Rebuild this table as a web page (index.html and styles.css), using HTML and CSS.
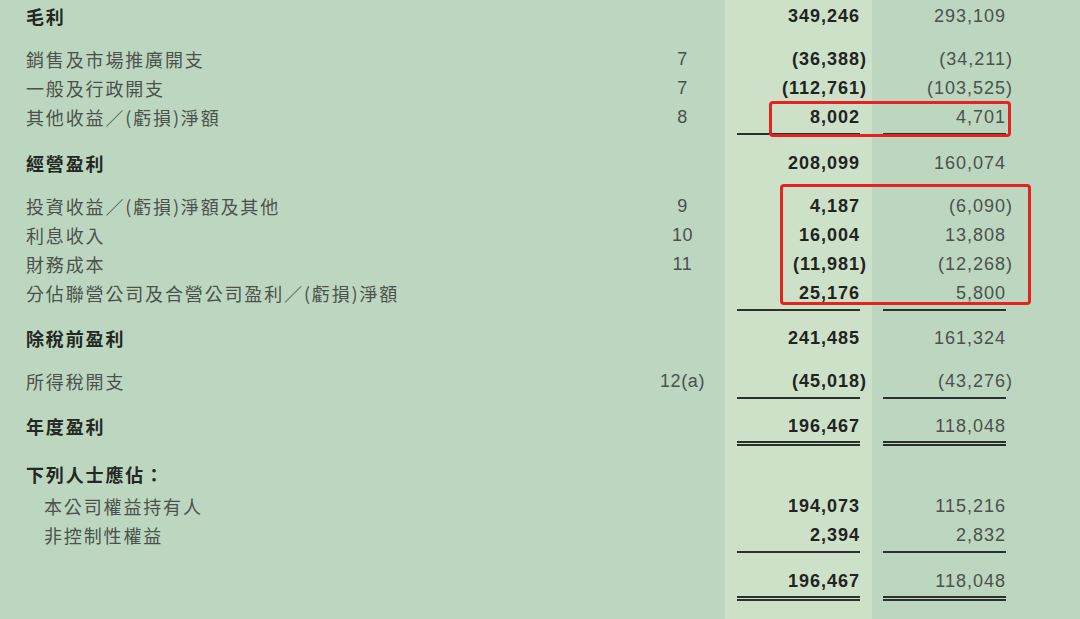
FILE: index.html
```html
<!DOCTYPE html>
<html lang="zh-Hant">
<head>
<meta charset="utf-8">
<title>綜合收益表</title>
<link rel="stylesheet" href="styles.css">
</head>
<body>
<div class="sheet">
  <div class="row">
    <div class="lbl b">毛利</div><div class="note"></div>
    <div class="num cur">349,246</div><div class="num prv">293,109</div>
  </div>

  <div class="row sp">
    <div class="lbl">銷售及市場推廣開支</div><div class="note">7</div>
    <div class="num cur">(36,388<span class="rp">)</span></div><div class="num prv">(34,211<span class="rp">)</span></div>
  </div>
  <div class="row">
    <div class="lbl">一般及行政開支</div><div class="note">7</div>
    <div class="num cur">(112,761<span class="rp">)</span></div><div class="num prv">(103,525<span class="rp">)</span></div>
  </div>
  <div class="row">
    <div class="lbl">其他收益／(虧損)淨額</div><div class="note">8</div>
    <div class="num cur u">8,002</div><div class="num prv u">4,701</div>
  </div>

  <div class="row sp">
    <div class="lbl b">經營盈利</div><div class="note"></div>
    <div class="num cur">208,099</div><div class="num prv">160,074</div>
  </div>

  <div class="row sp">
    <div class="lbl">投資收益／(虧損)淨額及其他</div><div class="note">9</div>
    <div class="num cur">4,187</div><div class="num prv">(6,090<span class="rp">)</span></div>
  </div>
  <div class="row">
    <div class="lbl">利息收入</div><div class="note">10</div>
    <div class="num cur">16,004</div><div class="num prv">13,808</div>
  </div>
  <div class="row">
    <div class="lbl">財務成本</div><div class="note">11</div>
    <div class="num cur">(11,981<span class="rp">)</span></div><div class="num prv">(12,268<span class="rp">)</span></div>
  </div>
  <div class="row">
    <div class="lbl">分佔聯營公司及合營公司盈利／(虧損)淨額</div><div class="note"></div>
    <div class="num cur u">25,176</div><div class="num prv u">5,800</div>
  </div>

  <div class="row sp-s">
    <div class="lbl b">除稅前盈利</div><div class="note"></div>
    <div class="num cur">241,485</div><div class="num prv">161,324</div>
  </div>

  <div class="row sp">
    <div class="lbl">所得稅開支</div><div class="note">12(a)</div>
    <div class="num cur u">(45,018<span class="rp">)</span></div><div class="num prv u">(43,276<span class="rp">)</span></div>
  </div>

  <div class="row sp-s">
    <div class="lbl b">年度盈利</div><div class="note"></div>
    <div class="num cur uu">196,467</div><div class="num prv uu">118,048</div>
  </div>

  <div class="row sp">
    <div class="lbl b">下列人士應佔：</div><div class="note"></div>
    <div class="num cur"></div><div class="num prv"></div>
  </div>
  <div class="row nudge">
    <div class="lbl ind">本公司權益持有人</div><div class="note"></div>
    <div class="num cur">194,073</div><div class="num prv">115,216</div>
  </div>
  <div class="row">
    <div class="lbl ind">非控制性權益</div><div class="note"></div>
    <div class="num cur u">2,394</div><div class="num prv u">2,832</div>
  </div>

  <div class="row sp">
    <div class="lbl"></div><div class="note"></div>
    <div class="num cur uu">196,467</div><div class="num prv uu">118,048</div>
  </div>

  <div class="mark mark-a"></div>
  <div class="mark mark-b"></div>
</div>
</body>
</html>
```

FILE: styles.css
```css
html, body {
  margin: 0;
  padding: 0;
}
body {
  width: 1080px;
  height: 619px;
  overflow: hidden;
  background: #bdd6c0;
}
.sheet {
  position: relative;
  height: 619px;
  box-sizing: border-box;
  padding-top: 2px;
  background: linear-gradient(to right,
    #bdd6c0 0, #bdd6c0 725px,
    #cde1c8 725px, #cde1c8 872px,
    #bdd6c0 872px, #bdd6c0 100%);
  font-family: "Liberation Sans", "Noto Sans CJK TC", sans-serif;
  font-size: 18px;
  color: #4a524b;
}
.row {
  display: grid;
  grid-template-columns: 640px 85px 147px 146px;
  align-items: start;
}
.row.sp { margin-top: 14px; }
.row.sp-s { margin-top: 13px; }
.row.nudge { margin-top: 3px; }
.lbl {
  padding-left: 26px;
  height: 29px;
  line-height: 29px;
  font-family: "Noto Sans CJK TC", "Liberation Sans", sans-serif;
  letter-spacing: 1.85px;
  white-space: nowrap;
}
.lbl.b {
  font-weight: 700;
  color: #222822;
}
.lbl.ind { padding-left: 44px; }
.note {
  height: 29px;
  line-height: 29px;
  text-align: center;
  letter-spacing: 0.6px;
  color: #4a524b;
}
.num {
  height: 29px;
  line-height: 29px;
  text-align: right;
  letter-spacing: 1px;
  white-space: nowrap;
}
.num.cur {
  margin: 0 12px;
  font-weight: 700;
  color: #1f241f;
}
.num.prv {
  margin: 0 12px 0 11px;
  color: #4a524b;
}
.rp { margin-right: -7px; }
.num.u {
  padding-bottom: 1px;
  border-bottom: 2px solid #2a302a;
}
.num.uu {
  padding-bottom: 0;
  border-bottom: 5px double #2a302a;
}
.mark {
  position: absolute;
  box-sizing: border-box;
  border: 3px solid #e5231e;
  border-radius: 4px;
}
.mark-a {
  left: 769px;
  top: 101px;
  width: 242px;
  height: 36px;
}
.mark-b {
  left: 780px;
  top: 184px;
  width: 251px;
  height: 121px;
}
```
